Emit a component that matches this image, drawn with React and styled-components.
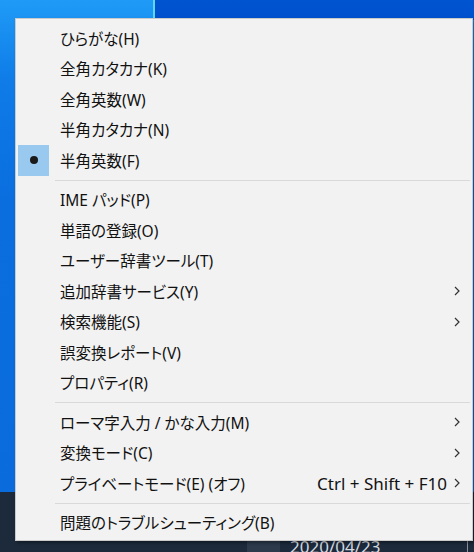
import React from 'react';
import styled, { createGlobalStyle } from 'styled-components';

const GlobalStyle = createGlobalStyle`
  html, body {
    margin: 0;
    padding: 0;
  }
`;

const Desktop = styled.div`
  position: relative;
  width: 474px;
  height: 552px;
  overflow: hidden;
  display: flex;
  flex-direction: column;
  font-family: "Noto Sans", "Noto Sans CJK JP", sans-serif;
`;

const Wallpaper = styled.div`
  flex: 1;
  background:
    linear-gradient(#5fd8f7, #5fd8f7) 153px 0 / 2px 20px no-repeat,
    linear-gradient(#0054d0, #0050cc) 155px 0 / 319px 20px no-repeat,
    linear-gradient(180deg, #1f9bf7 0px, #0f7ce8 80px, #0a6edf 200px, #0a6cdc 492px);
`;

const Taskbar = styled.div`
  height: 60px;
  background: #1c2a3b;
  display: flex;
  align-items: stretch;
  padding-left: 247px;
`;

const TaskButton = styled.div`
  width: 33px;
  background: #2c3a4c;
`;

const Clock = styled.div`
  margin-left: 10px;
  padding-top: 44px;
  font-size: 17px;
  line-height: 22px;
  color: #d6dae0;
  white-space: nowrap;
`;

const TrayEdge = styled.div`
  margin-left: auto;
  margin-right: 6px;
  width: 1px;
  background: #8b929c;
`;

const Menu = styled.div`
  position: absolute;
  left: 15px;
  top: 18px;
  width: 456px;
  border: 1px solid #cacaca;
  background: #f2f2f2;
  padding: 4px 0 2px;
  box-shadow: 2px 2px 3px rgba(0, 0, 0, 0.35);
`;

const Item = styled.div`
  height: 30.5px;
  display: flex;
  align-items: center;
  font-size: 15.5px;
  font-feature-settings: "palt";
  color: #111;
  white-space: nowrap;
`;

const Check = styled.div`
  width: 31px;
  height: 31px;
  margin-left: 2px;
  flex: none;
  display: flex;
  align-items: center;
  justify-content: center;
  background: ${(p) => (p.$on ? '#99c9ef' : 'transparent')};
`;

const Dot = styled.span`
  width: 8px;
  height: 8px;
  border-radius: 50%;
  background: #1a1a1a;
`;

const Label = styled.span`
  margin-left: 11px;
  flex: 1;
`;

const Shortcut = styled.span`
  margin-right: 7px;
  font-size: 17px;
`;

const ArrowSlot = styled.span`
  width: 6px;
  margin-right: 12px;
  display: flex;
  align-items: center;
`;

const Separator = styled.div`
  height: 1px;
  margin: 4px 2px 4px 39px;
  background: #d9d9d9;
`;

const Chevron = () => (
  <svg width="6" height="10" viewBox="0 0 6 10">
    <polyline points="1,1 5,5 1,9" fill="none" stroke="#333" strokeWidth="1.2" />
  </svg>
);

const groups = [
  [
    { label: 'ひらがな(H)' },
    { label: '全角カタカナ(K)' },
    { label: '全角英数(W)' },
    { label: '半角カタカナ(N)' },
    { label: '半角英数(F)', checked: true },
  ],
  [
    { label: 'IME パッド(P)' },
    { label: '単語の登録(O)' },
    { label: 'ユーザー辞書ツール(T)' },
    { label: '追加辞書サービス(Y)', sub: true },
    { label: '検索機能(S)', sub: true },
    { label: '誤変換レポート(V)' },
    { label: 'プロパティ(R)' },
  ],
  [
    { label: 'ローマ字入力 / かな入力(M)', sub: true },
    { label: '変換モード(C)', sub: true },
    { label: 'プライベートモード(E) (オフ)', shortcut: 'Ctrl + Shift + F10', sub: true },
  ],
  [
    { label: '問題のトラブルシューティング(B)' },
  ],
];

const App = () => (
  <>
    <GlobalStyle />
    <Desktop>
      <Wallpaper />
      <Taskbar>
        <TaskButton />
        <Clock>2020/04/23</Clock>
        <TrayEdge />
      </Taskbar>
      <Menu>
        {groups.map((group, gi) => (
          <React.Fragment key={gi}>
            {gi > 0 && <Separator />}
            {group.map((item) => (
              <Item key={item.label}>
                <Check $on={item.checked}>{item.checked && <Dot />}</Check>
                <Label>{item.label}</Label>
                {item.shortcut && <Shortcut>{item.shortcut}</Shortcut>}
                <ArrowSlot>{item.sub && <Chevron />}</ArrowSlot>
              </Item>
            ))}
          </React.Fragment>
        ))}
      </Menu>
    </Desktop>
  </>
);

export default App;
